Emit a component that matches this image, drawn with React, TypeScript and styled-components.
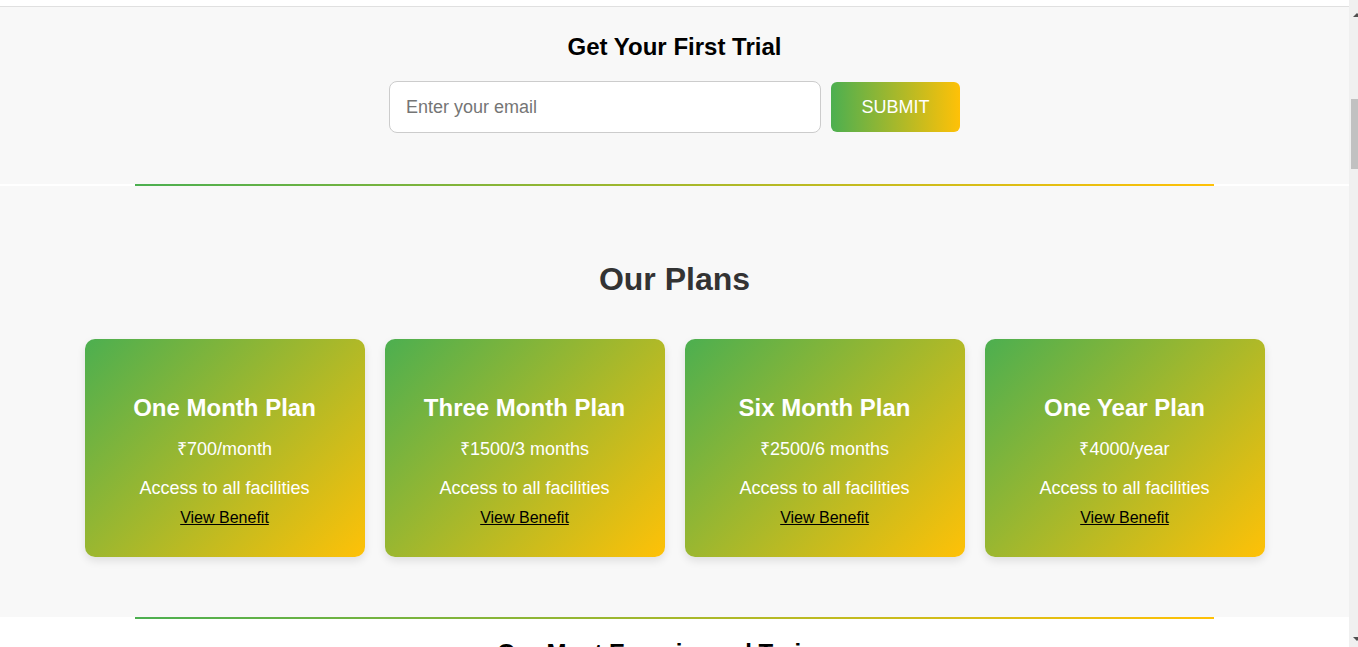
import styled, { createGlobalStyle } from "styled-components";

const GREEN = "#4caf50";
const AMBER = "#ffc107";

const plans = [
  { title: "One Month Plan", price: "₹700/month" },
  { title: "Three Month Plan", price: "₹1500/3 months" },
  { title: "Six Month Plan", price: "₹2500/6 months" },
  { title: "One Year Plan", price: "₹4000/year" },
];

function App() {
  return (
    <>
      <GlobalStyle />
      <Viewport>
        <Page>
          <TopEdge />
          <TrialSection>
            <TrialTitle>Get Your First Trial</TrialTitle>
            <TrialForm onSubmit={(e) => e.preventDefault()}>
              <EmailInput type="email" placeholder="Enter your email" />
              <SubmitButton type="submit">SUBMIT</SubmitButton>
            </TrialForm>
          </TrialSection>

          <Divider>
            <GradientLine />
          </Divider>

          <PlansSection>
            <SectionTitle>Our Plans</SectionTitle>
            <PlanGrid>
              {plans.map((p) => (
                <PlanCard key={p.title}>
                  <PlanName>{p.title}</PlanName>
                  <Price>{p.price}</Price>
                  <Access>Access to all facilities</Access>
                  <BenefitLink href="#">View Benefit</BenefitLink>
                </PlanCard>
              ))}
            </PlanGrid>
          </PlansSection>

          <Divider>
            <GradientLine />
          </Divider>

          <TrainersSection>
            <TrainersTitle>Our Most Experienced Trainers</TrainersTitle>
          </TrainersSection>
        </Page>

        {/* the window scrollbar, cut at the right edge as in the screenshot */}
        <ScrollRail>
          <ScrollTrack>
            <Arrow viewBox="0 0 8 4">
              <path d="M4 0 L8 4 L0 4 Z" />
            </Arrow>
            <Thumb />
            <Arrow viewBox="0 0 8 4">
              <path d="M0 0 L8 0 L4 4 Z" />
            </Arrow>
          </ScrollTrack>
        </ScrollRail>
      </Viewport>
    </>
  );
}
export default App;

const GlobalStyle = createGlobalStyle`
  html, body {
    margin: 0;
    padding: 0;
    height: 100%;
    overflow: hidden;
    background: #fff;
    font-family: "Liberation Sans", Arial, sans-serif;
  }
  #root {
    height: 100%;
  }
`;

const Viewport = styled.div`
  display: flex;
  height: 100%;
`;

const Page = styled.main`
  flex: 1;
  min-width: 0;
  overflow: hidden;
`;

const ScrollRail = styled.div`
  flex: 0 0 9px;
  overflow: hidden;
  background: #f0f0f0;
`;

const ScrollTrack = styled.div`
  width: 15px;
  height: 100%;
  display: flex;
  flex-direction: column;
  align-items: center;
  padding: 13px 0 6px;
  box-sizing: border-box;
`;

const Arrow = styled.svg`
  width: 8px;
  height: 4px;
  fill: #505050;
  flex-shrink: 0;
`;

const Thumb = styled.div`
  width: 11px;
  height: 70px;
  margin: 82px 0 auto;
  background: #c1c1c1;
`;

const TopEdge = styled.div`
  height: 6px;
  background: #fff;
  border-bottom: 1px solid #e0e0e0;
`;

const TrialSection = styled.section`
  background: #f8f8f8;
  padding: 26px 0 51px;
  text-align: center;
`;

const TrialTitle = styled.h2`
  margin: 0 0 20px;
  font-size: 24px;
  line-height: 28px;
  font-weight: 700;
  color: #000;
`;

const TrialForm = styled.form`
  display: flex;
  justify-content: center;
  align-items: center;
  gap: 10px;
`;

const EmailInput = styled.input`
  box-sizing: border-box;
  width: 432px;
  height: 52px;
  padding: 0 16px;
  border: 1px solid #ccc;
  border-radius: 8px;
  background: #fff;
  font-family: inherit;
  font-size: 18px;
  color: #333;
  outline: none;

  &::placeholder {
    color: #757575;
  }
`;

const SubmitButton = styled.button`
  width: 129px;
  height: 50px;
  border: none;
  border-radius: 6px;
  background: linear-gradient(to right, ${GREEN}, ${AMBER});
  color: #fff;
  font-family: inherit;
  font-size: 18px;
  cursor: pointer;
`;

const Divider = styled.div`
  height: 2px;
  background: #fff;
`;

const GradientLine = styled.div`
  width: 80%;
  height: 2px;
  margin: 0 auto;
  background: linear-gradient(to right, ${GREEN}, ${AMBER});
`;

const PlansSection = styled.section`
  background: #f8f8f8;
  padding: 60px 0;
  text-align: center;
`;

const SectionTitle = styled.h2`
  margin: 15px 0 41px;
  font-size: 32px;
  line-height: 37px;
  font-weight: 700;
  color: #333;
`;

const PlanGrid = styled.div`
  display: flex;
  justify-content: center;
  gap: 20px;
`;

const PlanCard = styled.div`
  box-sizing: border-box;
  width: 280px;
  padding: 31px 20px 30px;
  border-radius: 10px;
  background: linear-gradient(135deg, ${GREEN}, ${AMBER});
  box-shadow: 0 4px 8px rgba(0, 0, 0, 0.1);
  color: #fff;
`;

const PlanName = styled.h3`
  margin: 24px 0 17px;
  font-size: 24px;
  line-height: 28px;
  font-weight: 700;
`;

const Price = styled.p`
  margin: 0 0 18px;
  font-size: 18px;
  line-height: 21px;
`;

const Access = styled.p`
  margin: 0 0 10px;
  font-size: 18px;
  line-height: 21px;
`;

const BenefitLink = styled.a`
  display: inline-block;
  font-size: 16px;
  line-height: 18px;
  color: #000;
  text-decoration: underline;
`;

const TrainersSection = styled.section`
  background: #fff;
  padding: 20px 0 400px;
  text-align: center;
`;

const TrainersTitle = styled.h2`
  margin: 0;
  font-size: 24px;
  line-height: 28px;
  font-weight: 700;
  color: #000;
`;
